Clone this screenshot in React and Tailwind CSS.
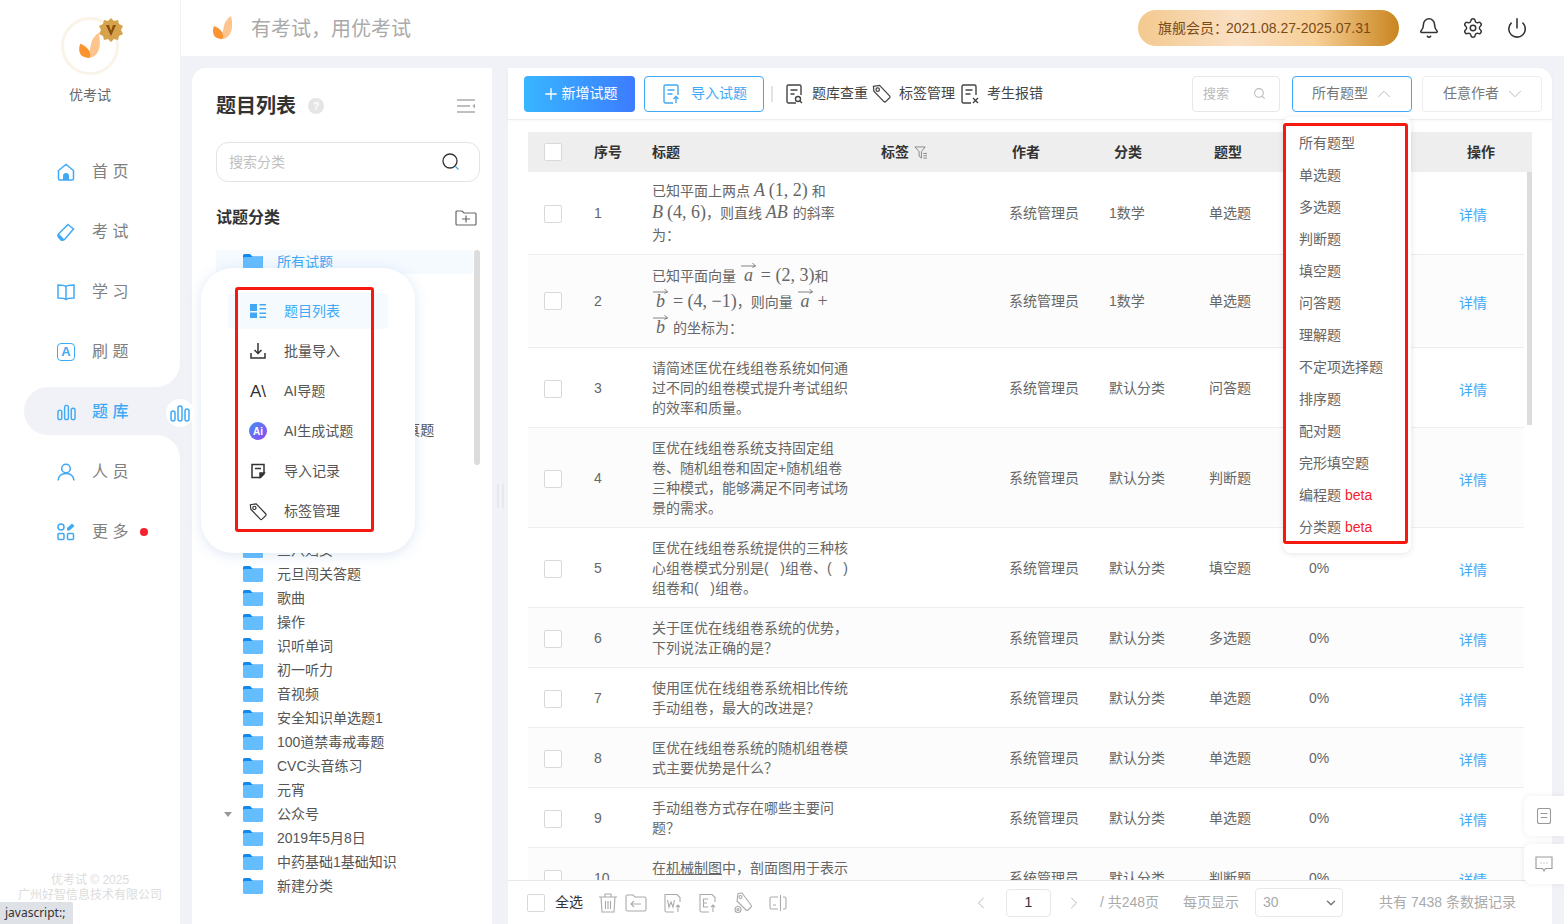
import React from 'react';
import {Bell, ChevronDown, ChevronLeft, ChevronRight, ChevronUp, Plus, Power, Search, Settings} from 'lucide-react';

const Logo = ({className}) => (
    <svg viewBox="0 0 20 24" className={className}>
        <path d="M18 0c2 8 2 18-5 22-4 2-7 1-8 0 5-2 5-8 6-12 1-5 4-8 7-10z" fill="#fdc48d" />
        <path d="M1 10c-2 5-1 10 3 12 3 1 6 1 6 0 1-5-2-9-9-12z" fill="#fb9331" />
    </svg>
);

const Badge = () => (
    <svg viewBox="0 0 24 24" className="absolute top-[-2px] right-[-7px] h-6 w-6">
        <path
            d="M12 0l3 3 4-1 1 4 4 2-2 4 2 4-4 2-1 4-4-1-3 3-3-3-4 1-1-4-4-2 2-4-2-4 4-2 1-4 4 1z"
            fill="#d6a24c"
        />
        <path d="M7 7l5 11 5-11h-3l-2 6-2-6z" fill="#8a4f0d" />
    </svg>
);

const HomeIcon = () => (
    <svg viewBox="0 0 18 18" className="h-[18px] w-[18px]" fill="none" stroke="#3fa9f5" strokeWidth="1.5">
        <path d="M1.5 7.5L9 1.5l7.5 6v8a1.5 1.5 0 0 1-1.5 1.5H3a1.5 1.5 0 0 1-1.5-1.5z" />
        <path d="M6 17v-4a3 3 0 0 1 6 0v4z" fill="#3fa9f5" stroke="none" />
    </svg>
);
const ExamIcon = () => (
    <svg viewBox="0 0 18 18" className="h-[18px] w-[18px]" fill="none" stroke="#3fa9f5" strokeWidth="1.5">
        <path d="M11 1.5l5.500 4.500-9 10.500a1.500 1.500 0 0 1-2 0L1.500 13a1.500 1.500 0 0 1 0-2z" />
        <path d="M1.500 10.500l6 6-2 1.500H4L.5 14v-2z" fill="#3fa9f5" stroke="none" />
    </svg>
);
const BookIcon = () => (
    <svg viewBox="0 0 18 18" className="h-[18px] w-[18px]" fill="none" stroke="#3fa9f5" strokeWidth="1.5">
        <path d="M9 3.500C7.500 2 5 2 1 2v13c4 0 6.500 0 8 1.500 1.500-1.500 4-1.500 8-1.500V2c-4 0-6.500 0-8 1.500z" />
        <path d="M9 3.500v13" />
    </svg>
);
const BarsIcon = ({className = 'h-[17px] w-[20px]'}) => (
    <svg viewBox="0 0 20 17" className={className} fill="none" stroke="#3fa9f5" strokeWidth="1.500">
        <rect x="1" y="6" width="4" height="10" rx="2" />
        <rect x="8" y="1" width="4" height="15" rx="2" />
        <rect x="15" y="4" width="4" height="12" rx="2" />
    </svg>
);
const UserIcon = () => (
    <svg viewBox="0 0 18 18" className="h-[18px] w-[18px]" fill="none" stroke="#3fa9f5" strokeWidth="1.500">
        <circle cx="9" cy="5.500" r="4.300" />
        <path d="M1 17.500c.5-4.500 3.500-7 8-7s7.500 2.500 8 7" />
    </svg>
);
const MoreIcon = () => (
    <svg viewBox="0 0 18 18" className="h-[18px] w-[18px]" fill="none" stroke="#3fa9f5" strokeWidth="1.500">
        <circle cx="4" cy="4" r="3" />
        <rect x="1" y="10.500" width="6" height="6" rx="1" />
        <rect x="10.500" y="10.500" width="6" height="6" rx="1" />
        <path d="M10 5l5-4.500 2.500 2.500-5 4.500h-2.500z" fill="#3fa9f5" stroke="none" />
    </svg>
);
const TagIcon = ({className = 'h-[20px] w-[20px]', stroke = '#444'}) => (
    <svg viewBox="0 0 20 20" className={className} fill="none" stroke={stroke} strokeWidth="1.300">
        <path d="M1.500 2.500l6.500-1 10.500 11a1.500 1.500 0 0 1 0 2l-4 4a1.500 1.500 0 0 1-2 0L2 7.500z" />
        <circle cx="6" cy="6" r="1.800" />
    </svg>
);
const DocIcon = ({children, stroke = '#444', className = 'h-[20px] w-[18px]'}) => (
    <svg viewBox="0 0 18 20" className={className} fill="none" stroke={stroke} strokeWidth="1.400">
        <path d="M10 19H2.500A1.500 1.500 0 0 1 1 17.500v-15A1.500 1.500 0 0 1 2.500 1h11A1.500 1.500 0 0 1 15 2.500V11" />
        {children}
    </svg>
);
const FolderIcon = () => (
    <svg viewBox="0 0 20 16" className="h-[16px] w-[20px] shrink-0">
        <path d="M0 1.500A1.500 1.500 0 0 1 1.500 0h5.500l2.500 2.500H20V6H0z" fill="#0d8bf2" />
        <rect x="0" y="3" width="20" height="13" rx="1.500" fill="#64bdff" />
    </svg>
);

const MENU = [
    {label: '首 页', icon: <HomeIcon />},
    {label: '考 试', icon: <ExamIcon />},
    {label: '学 习', icon: <BookIcon />},
    {
        label: '刷 题',
        icon: (
            <span className="flex h-[18px] w-[18px] items-center justify-center rounded-[4px] border-[1.5px] border-[#3fa9f5] text-[13px] font-bold text-[#3fa9f5]">
                A
            </span>
        ),
    },
];

const NavItem = ({icon, label, dot}) => (
    <div className="flex h-[60px] items-center pl-[57px]">
        <span className="mr-[17px] flex w-[18px] justify-center">{icon}</span>
        <span className="text-[16px] text-[#808080]">{label}</span>
        {dot && <span className="ml-[12px] h-2 w-2 rounded-full bg-[#f5222d]" />}
    </div>
);

const Sidebar = () => (
    <div className="relative flex w-[180px] shrink-0 flex-col bg-[#f0f2f7]">
        <div className="rounded-br-[24px] bg-white pb-[5px]">
            <div className="flex h-[142px] flex-col items-center pt-[17px]">
                <div className="relative flex h-[58px] w-[58px] items-center justify-center rounded-full border-[3px] border-[#faf3e8] bg-white">
                    <Logo className="h-[26px] w-[22px]" />
                    <Badge />
                </div>
                <span className="mt-[10px] text-[14px] leading-[20px] text-[#666]">优考试</span>
            </div>
            {MENU.map(item => (
                <NavItem key={item.label} {...item} />
            ))}
        </div>
        <div className="bg-white">
            <div className="relative ml-[24px] flex h-[48px] items-center rounded-l-[24px] bg-[#f0f2f7] pt-[2px] pl-[33px]">
                <span className="mr-[16px] flex w-[19px] justify-center">
                    <BarsIcon />
                </span>
                <span className="text-[16px] font-medium text-[#3fa9f5]">题 库</span>
            </div>
        </div>
        <div className="flex flex-1 flex-col rounded-tr-[24px] bg-white pt-[7px]">
            <NavItem label="人 员" icon={<UserIcon />} />
            <NavItem label="更 多" icon={<MoreIcon />} dot />
            <div className="mt-auto pb-[21px] text-center text-[12px] leading-[15px] text-[#dcdcdc]">
                <div>优考试 © 2025</div>
                <div>广州好智信息技术有限公司</div>
            </div>
        </div>
        <div className="absolute top-[399px] left-[166px] z-30 flex h-[28px] w-[28px] items-center justify-center rounded-full bg-white">
            <BarsIcon className="h-[17px] w-[20px]" />
        </div>
    </div>
);

const Header = () => (
    <div className="flex h-[56px] shrink-0 items-center border-l border-[#f0f2f7] bg-white pr-[36px] pl-[32px]">
        <Logo className="h-[24px] w-[20px]" />
        <span className="ml-[18px] pt-[2px] text-[20px] text-[#aaa]">有考试，用优考试</span>
        <div className="mr-[19px] ml-auto flex h-[36px] w-[261px] items-center rounded-full bg-[linear-gradient(90deg,#f3c98e_0%,#fae0c4_38%,#f7cf97_68%,#c9851f_100%)] pl-[20px] text-[14px] text-[#7a4a14]">
            旗舰会员<span className="-mr-[2px]">：</span>2021.08.27-2025.07.31
        </div>
        <Bell className="h-[22px] w-[22px] text-[#333]" strokeWidth={1.7} />
        <Settings className="ml-[22px] h-[22px] w-[22px] text-[#333]" strokeWidth={1.6} />
        <Power className="ml-[22px] h-[22px] w-[22px] text-[#333]" strokeWidth={1.7} />
    </div>
);

const TREE = [
    '所有试题',
    '',
    '',
    '',
    '',
    '',
    '',
    '2024年全国高考数学真题',
    '',
    '',
    '',
    '',
    '三八妇女',
    '元旦闯关答题',
    '歌曲',
    '操作',
    '识听单词',
    '初一听力',
    '音视频',
    '安全知识单选题1',
    '100道禁毒戒毒题',
    'CVC头音练习',
    '元宵',
    '公众号',
    '2019年5月8日',
    '中药基础1基础知识',
    '新建分类',
];

const LeftPanel = () => (
    <div className="flex w-[300px] shrink-0 flex-col overflow-hidden rounded-tl-[14px] bg-white pt-[24px] pr-[12px] pl-[24px]">
        <div className="flex h-[28px] items-center">
            <span className="text-[20px] font-bold text-[#333]">题目列表</span>
            <span className="ml-[12px] flex h-4 w-4 items-center justify-center rounded-full bg-[#e5e5e5] text-[11px] font-bold text-white">
                ?
            </span>
            <svg viewBox="0 0 20 16" className="mr-[4px] ml-auto h-[16px] w-[20px]" stroke="#aaa" strokeWidth="1.500">
                <path d="M1 2h18M1 8h13M1 14h18" />
                <path d="M19 5.500L16.500 8l2.500 2.500z" fill="#aaa" stroke="none" />
            </svg>
        </div>
        <div className="mt-[22px] flex h-[40px] items-center justify-between rounded-[12px] border border-[#e3e3e3] pr-[19px] pl-[12px]">
            <span className="text-[14px] text-[#c0c0c0]">搜索分类</span>
            <svg viewBox="0 0 18 18" className="h-[18px] w-[18px]" fill="none" strokeWidth="1.300">
                <circle cx="8" cy="8" r="7" stroke="#333" />
                <path d="M13.500 13.500l3 3" stroke="#3fa9f5" />
            </svg>
        </div>
        <div className="mt-[24px] flex h-[24px] items-center justify-between">
            <span className="text-[16px] font-bold text-[#333]">试题分类</span>
            <svg viewBox="0 0 22 16" className="mr-[3px] h-[16px] w-[22px]" fill="none" stroke="#666" strokeWidth="1.200">
                <path d="M1 2a1 1 0 0 1 1-1h5l2 2h11a1 1 0 0 1 1 1v10a1 1 0 0 1-1 1H2a1 1 0 0 1-1-1z" />
                <path d="M7 9h8M11 5.500v7" />
            </svg>
        </div>
        <div className="relative mt-[20px] min-h-0 flex-1 overflow-hidden">
            <div className="absolute top-0 right-0 h-[215px] w-[6px] rounded-[3px] bg-[#dcdcdc]" />
            {TREE.map((name, i) => (
                <div
                    key={i}
                    className={
                        'relative mr-[7px] flex h-[24px] items-center pl-[27px] text-[14px] ' +
                        (i === 0 ? 'bg-[#f5faff] text-[#3fa9f5]' : 'text-[#555]')
                    }>
                    {name === '公众号' && (
                        <span className="absolute top-[10px] left-[8px] h-0 w-0 border-x-[4px] border-t-[5px] border-x-transparent border-t-[#999]" />
                    )}
                    <FolderIcon />
                    <span className="ml-[14px] whitespace-nowrap">{name}</span>
                </div>
            ))}
        </div>
    </div>
);

const ToolButton = ({icon, label}) => (
    <div className="flex items-center text-[14px] text-[#444]">
        {icon}
        <span className="ml-[8px]">{label}</span>
    </div>
);

const Toolbar = () => (
    <div className="flex h-[52px] shrink-0 items-center border-b border-[#eeeeee] pr-[10px] pl-[16px] shadow-[0_1px_3px_rgba(0,0,0,0.03)]">
        <div className="flex h-[36px] w-[111px] items-center justify-center rounded-[4px] bg-gradient-to-r from-[#38b6ff] to-[#3d7bff] text-[14px] text-white">
            <Plus className="mr-[2px] h-[18px] w-[18px]" strokeWidth={1.800} />
            新增试题
        </div>
        <div className="ml-[9px] flex h-[36px] w-[120px] items-center justify-center rounded-[4px] border border-[#3fa9f5] pl-[2px] text-[14px] text-[#3fa9f5]">
            <DocIcon stroke="#3fa9f5" className="mr-[10px] h-[20px] w-[18px]">
                <path d="M4.500 6h7M4.500 10h5" />
                <path d="M13 19v-6M10.500 15l2.500-2.500 2.500 2.500" />
            </DocIcon>
            导入试题
        </div>
        <div className="mx-[7px] h-[16px] w-[2px] bg-[#e3e3e3]" />
        <div className="ml-[6px] flex items-center gap-[4px]">
            <ToolButton
                label="题库查重"
                icon={
                    <DocIcon>
                        <path d="M4.500 6h7M4.500 10h4" />
                        <circle cx="12" cy="15" r="2.500" />
                        <path d="M14 17l2 2" />
                    </DocIcon>
                }
            />
            <ToolButton label="标签管理" icon={<TagIcon className="h-[19px] w-[19px]" />} />
            <div className="ml-[2px]">
                <ToolButton
                    label="考生报错"
                    icon={
                        <DocIcon>
                            <path d="M4.500 6h7M4.500 10h5" />
                            <path d="M12 14l5 5M17 14l-5 5" />
                        </DocIcon>
                    }
                />
            </div>
        </div>
        <div className="ml-auto flex h-[36px] w-[88px] items-center justify-between rounded-[4px] border border-[#e8e8e8] pr-[13px] pl-[10px] text-[13px] text-[#bbb]">
            搜索
            <Search className="h-[13px] w-[13px] text-[#bbb]" />
        </div>
        <div className="ml-[12px] flex h-[36px] w-[120px] items-center rounded-[4px] border border-[#3fa9f5] pl-[19px] text-[14px] text-[#777]">
            所有题型
            <ChevronUp className="ml-[5px] h-[22px] w-[22px] text-[#aaa]" strokeWidth={0.9} />
        </div>
        <div className="ml-[10px] flex h-[36px] w-[120px] items-center rounded-[4px] border border-[#eeeeee] pl-[20px] text-[14px] text-[#777]">
            任意作者
            <ChevronDown className="ml-[5px] h-[22px] w-[22px] text-[#aaa]" strokeWidth={0.9} />
        </div>
    </div>
);

const M = ({children}) => (
    <span className="font-['Liberation_Serif',serif] text-[18px] leading-none text-[#666]">{children}</span>
);
const I = ({children}) => (
    <i className="font-['Liberation_Serif',serif] text-[18px] leading-none text-[#666]">{children}</i>
);
const Vec = ({children}) => (
    <span className="relative mx-[1px] inline-block w-[15px] text-center leading-none">
        <svg
            viewBox="0 0 15 6"
            className="absolute top-[-4px] left-0 h-[6px] w-[15px]"
            fill="none"
            stroke="#666"
            strokeWidth="0.800">
            <path d="M0 4h14.500M11.500 1l3 3-3 1.500" />
        </svg>
        <I>{children}</I>
    </span>
);

const Plain = ({lines}) => lines.map(line => <div key={line}>{line}</div>);

const ROWS = [
    {
        no: 1,
        rowClass: 'h-[82px]',
        author: '系统管理员',
        cat: '1数学',
        type: '单选题',
        rate: '',
        title: (
            <div className="-mt-[2px] leading-[22px]">
                <div>
                    已知平面上两点 <I>A</I> <M>(1, 2)</M> 和
                </div>
                <div>
                    <I>B</I> <M>(4, 6)</M>，则直线 <I>AB</I>
                    <span className="ml-[5px]">的斜率</span>
                </div>
                <div>为：</div>
            </div>
        ),
    },
    {
        no: 2,
        rowClass: 'h-[93px]',
        author: '系统管理员',
        cat: '1数学',
        type: '单选题',
        rate: '',
        title: (
            <div className="mt-[2px] leading-[26px]">
                <div>
                    已知平面向量 <Vec>a</Vec> <M>= (2, 3)</M>和
                </div>
                <div>
                    <Vec>b</Vec> <M>= (4, −1)</M>，则向量 <Vec>a</Vec> <M>+</M>
                </div>
                <div>
                    <Vec>b</Vec> 的坐标为：
                </div>
            </div>
        ),
    },
    {
        no: 3,
        rowClass: 'h-[80px]',
        author: '系统管理员',
        cat: '默认分类',
        type: '问答题',
        rate: '',
        title: <Plain lines={['请简述匡优在线组卷系统如何通', '过不同的组卷模式提升考试组织', '的效率和质量。']} />,
    },
    {
        no: 4,
        rowClass: 'h-[100px]',
        author: '系统管理员',
        cat: '默认分类',
        type: '判断题',
        rate: '',
        title: (
            <Plain
                lines={[
                    '匡优在线组卷系统支持固定组',
                    '卷、随机组卷和固定+随机组卷',
                    '三种模式，能够满足不同考试场',
                    '景的需求。',
                ]}
            />
        ),
    },
    {
        no: 5,
        rowClass: 'h-[80px]',
        author: '系统管理员',
        cat: '默认分类',
        type: '填空题',
        rate: '0%',
        title: <Plain lines={['匡优在线组卷系统提供的三种核', '心组卷模式分别是(   )组卷、(   )', '组卷和(   )组卷。']} />,
    },
    {
        no: 6,
        rowClass: 'h-[60px]',
        author: '系统管理员',
        cat: '默认分类',
        type: '多选题',
        rate: '0%',
        title: <Plain lines={['关于匡优在线组卷系统的优势，', '下列说法正确的是？']} />,
    },
    {
        no: 7,
        rowClass: 'h-[60px]',
        author: '系统管理员',
        cat: '默认分类',
        type: '单选题',
        rate: '0%',
        title: <Plain lines={['使用匡优在线组卷系统相比传统', '手动组卷，最大的改进是？']} />,
    },
    {
        no: 8,
        rowClass: 'h-[60px]',
        author: '系统管理员',
        cat: '默认分类',
        type: '单选题',
        rate: '0%',
        title: <Plain lines={['匡优在线组卷系统的随机组卷模', '式主要优势是什么？']} />,
    },
    {
        no: 9,
        rowClass: 'h-[60px]',
        author: '系统管理员',
        cat: '默认分类',
        type: '单选题',
        rate: '0%',
        title: <Plain lines={['手动组卷方式存在哪些主要问', '题？']} />,
    },
    {
        no: 10,
        rowClass: 'h-[60px]',
        author: '系统管理员',
        cat: '默认分类',
        type: '判断题',
        rate: '0%',
        title: (
            <div>
                在<u className="underline">机械制图</u>中，剖面图用于表示
                <br />
                物体的内部结构。
            </div>
        ),
    },
];

const GRID = 'grid grid-cols-[66px_58px_229px_128px_100px_100px_100px_150px_1fr] items-center';

const Checkbox = () => <span className="ml-[16px] block h-[18px] w-[18px] rounded-[2px] border border-[#d9d9d9] bg-white" />;

const Table = () => (
    <div className="relative min-h-0 flex-1 overflow-hidden px-[20px] pt-[12px]">
        <div className={GRID + ' h-[40px] bg-[#eeeeee] text-[14px] font-bold text-[#333]'}>
            <Checkbox />
            <span>序号</span>
            <span>标题</span>
            <span className="flex items-center">
                标签
                <svg viewBox="0 0 14 14" className="ml-[5px] h-[13px] w-[13px]" fill="none" stroke="#777" strokeWidth="0.900">
                    <path d="M1 1h11L8 6v7L5.500 11V6z" />
                    <path d="M10 8h4M10 10.500h4M10 13h4" />
                </svg>
            </span>
            <span className="pl-[3px]">作者</span>
            <span className="pl-[5px]">分类</span>
            <span className="pl-[5px]">题型</span>
            <span />
            <span className="pl-[8px]">操作</span>
        </div>
        <div className="mr-[8px] pt-[1px]">
            {ROWS.map(row => {
                const cell = row.no > 2 ? 'pt-[2px]' : '';
                return (
                    <div
                        key={row.no}
                        className={
                            GRID +
                            ' border-b border-[#eeeeee] text-[14px] text-[#666] ' +
                            row.rowClass +
                            (row.no % 2 === 0 ? ' bg-[#fcfcfc]' : ' bg-white')
                        }>
                        <div className={cell}>
                            <Checkbox />
                        </div>
                        <span className={cell}>{row.no}</span>
                        <div className="col-span-2 leading-[20px] whitespace-pre">{row.title}</div>
                        <span className={cell}>{row.author}</span>
                        <span className={cell}>{row.cat}</span>
                        <span className={cell}>{row.type}</span>
                        <span className={cell}>{row.rate}</span>
                        <span className={'mt-[4px] text-[#3fa9f5] ' + cell}>详情</span>
                    </div>
                );
            })}
        </div>
        <div className="absolute top-[52px] right-[20px] h-[253px] w-[5px] bg-[#dcdcdc]" />
    </div>
);

const FooterIcons = () => (
    <div className="ml-[16px] flex items-center gap-[17px]">
        <svg viewBox="0 0 18 20" className="-mr-[9px] h-[20px] w-[18px]" fill="none" stroke="#aaa" strokeWidth="1.100">
            <path d="M0 4h18M6 4V1h6v3M2 4l1 15h12l1-15M6.500 8v8M9 8v8M11.500 8v8" />
        </svg>
        <svg viewBox="0 0 22 18" className="h-[18px] w-[22px]" fill="none" stroke="#aaa" strokeWidth="1.100">
            <path d="M1 2.500A1.500 1.500 0 0 1 2.500 1H8l2 2h9.500A1.500 1.500 0 0 1 21 4.500v11a1.500 1.500 0 0 1-1.500 1.500h-17A1.500 1.500 0 0 1 1 15.500z" />
            <path d="M16 10H6M9 7l-3 3 3 3" />
        </svg>
        <svg viewBox="0 0 18 20" className="h-[20px] w-[18px]" fill="none" stroke="#aaa" strokeWidth="1.100">
            <path d="M10 19H2.500A1.500 1.500 0 0 1 1 17.500v-16h12l3 3V9" />
            <path d="M3.500 7l1.500 7 2-5 2 5 1.500-7M14 19v-7M12 14l2-2 2 2" />
        </svg>
        <svg viewBox="0 0 18 20" className="h-[20px] w-[18px]" fill="none" stroke="#aaa" strokeWidth="1.100">
            <path d="M10 19H2.500A1.500 1.500 0 0 1 1 17.500v-16h12l3 3V9" />
            <path d="M9 6H4.500v8H9M4.500 10H8M14 19v-7M12 14l2-2 2 2" />
        </svg>
        <svg viewBox="0 0 18 22" className="h-[22px] w-[18px]" fill="none" stroke="#aaa" strokeWidth="1.100">
            <path d="M4 1.500l4-.5 9 12a1.500 1.500 0 0 1 0 2l-3 3a1.500 1.500 0 0 1-2 0L3 9z" />
            <circle cx="6.500" cy="5" r="1.500" />
            <circle cx="4" cy="17.500" r="3" />
            <circle cx="4" cy="17.500" r="1" />
        </svg>
        <svg viewBox="0 0 18 18" className="h-[18px] w-[18px]" fill="none" stroke="#aaa" strokeWidth="1.100">
            <path d="M9 3H2.500A1.500 1.500 0 0 0 1 4.500v9A1.500 1.500 0 0 0 2.500 15H9M14 3h1.500A1.500 1.500 0 0 1 17 4.500v9a1.500 1.500 0 0 1-1.500 1.500H14" />
            <path d="M11.500 1v16M4 11h3" />
        </svg>
    </div>
);

const Footer = () => (
    <div className="flex h-[44px] shrink-0 items-center border-t border-[#e8e8e8] bg-white pr-[36px] pl-[19px] text-[14px]">
        <span className="h-[18px] w-[18px] rounded-[2px] border border-[#d9d9d9]" />
        <span className="ml-[10px] text-[#333]">全选</span>
        <FooterIcons />
        <ChevronLeft className="mr-[15px] ml-auto h-[20px] w-[20px] text-[#aaa]" strokeWidth={1} />
        <span className="mr-[13px] flex h-[28px] w-[45px] items-center justify-center rounded-[4px] border border-[#e8e8e8] text-[#333]">
            1
        </span>
        <ChevronRight className="h-[20px] w-[20px] text-[#aaa]" strokeWidth={1} />
        <span className="ml-[16px] text-[#aaa]">/ 共248页</span>
        <span className="ml-[24px] text-[#aaa]">每页显示</span>
        <span className="ml-[16px] flex h-[29px] w-[88px] items-center justify-between rounded-[4px] border border-[#e8e8e8] pr-[4px] pl-[7px] text-[#aaa]">
            30
            <ChevronDown className="h-[14px] w-[14px] text-[#777]" strokeWidth={2.500} />
        </span>
        <span className="ml-[36px] text-[#aaa]">共有 7438 条数据记录</span>
    </div>
);

const POPUP = [
    {
        label: '题目列表',
        active: true,
        icon: (
            <svg viewBox="0 0 16 16" className="h-4 w-4" fill="#3fa9f5">
                <path d="M0 1h7v7H0zM0 9.500h7V15H0zM9.500 1H16v1.500H9.500zM9.500 5H16v1.500H9.500zM9.500 9.500H16V11H9.500zM9.500 13.500H16V15H9.500z" />
            </svg>
        ),
    },
    {
        label: '批量导入',
        icon: (
            <svg viewBox="0 0 16 16" className="h-4 w-4" fill="none" stroke="#333" strokeWidth="1.500">
                <path d="M8 0v10M4.500 7L8 10.500 11.500 7M1 10v5h14v-5" />
            </svg>
        ),
    },
    {
        label: 'AI导题',
        icon: <span className="flex h-4 w-4 items-center text-[17px] leading-none font-medium text-[#333]">A\</span>,
    },
    {
        label: 'AI生成试题',
        icon: (
            <span className="flex h-[18px] w-[18px] items-center justify-center rounded-full bg-gradient-to-br from-[#2f8ef5] to-[#8a3df0] text-[10px] font-bold text-white">
                Ai
            </span>
        ),
    },
    {
        label: '导入记录',
        icon: (
            <svg viewBox="0 0 16 16" className="h-4 w-4" fill="none" stroke="#333" strokeWidth="1.500">
                <path d="M2 1.500h12V11l-3.500 3.500H2z" />
                <path d="M5 5.500h6" />
                <path d="M10 14v-4h4z" fill="#333" />
            </svg>
        ),
    },
    {label: '标签管理', icon: <TagIcon className="h-[19px] w-[19px]" stroke="#333" />},
];

const CategoryPopup = () => (
    <div className="absolute top-[268px] left-[201px] z-20 h-[285px] w-[214px] rounded-[32px] bg-white pt-[25px] pl-[27px] shadow-[0_2px_14px_rgba(90,140,200,0.2)]">
        {POPUP.map(item => (
            <div
                key={item.label}
                className={
                    'mb-[4px] flex h-[36px] w-[160px] items-center rounded-[4px] pl-[21px] text-[14px] ' +
                    (item.active ? 'bg-[#f5faff] text-[#3fa9f5]' : 'text-[#555]')
                }>
                <span className="flex w-[18px] justify-center">{item.icon}</span>
                <span className="ml-[17px]">{item.label}</span>
            </div>
        ))}
        <div className="absolute top-[19px] left-[34px] h-[245px] w-[139px] rounded-[3px] border-[3px] border-[#f5190f]" />
    </div>
);

const TYPES = ['所有题型', '单选题', '多选题', '判断题', '填空题', '问答题', '理解题', '不定项选择题', '排序题', '配对题', '完形填空题'];

const TypeDropdown = () => (
    <div className="absolute top-[117px] left-[1283px] z-20 h-[436px] w-[128px] rounded-[8px] bg-white pt-[10px] shadow-[0_1px_6px_rgba(0,0,0,0.1)]">
        {TYPES.map(t => (
            <div key={t} className="flex h-[32px] items-center pl-[16px] text-[14px] text-[#666]">
                {t}
            </div>
        ))}
        <div className="flex h-[32px] items-center pl-[16px] text-[14px] text-[#666]">
            编程题<span className="ml-[4px] text-[#f5222d]">beta</span>
        </div>
        <div className="flex h-[32px] items-center pl-[16px] text-[14px] text-[#666]">
            分类题<span className="ml-[4px] text-[#f5222d]">beta</span>
        </div>
        <div className="absolute top-[6px] left-0 h-[421px] w-[125px] rounded-[3px] border-[3px] border-[#f5190f]" />
    </div>
);

const SideTools = () => (
    <div className="absolute top-[796px] right-0 z-10 flex flex-col gap-[8px]">
        <div className="flex h-[40px] w-[40px] items-center justify-center rounded-l-[8px] bg-white shadow-[0_0_6px_rgba(0,0,0,0.08)]">
            <svg viewBox="0 0 14 16" className="h-[16px] w-[14px]" fill="none" stroke="#999" strokeWidth="1.100">
                <rect x="0.500" y="0.500" width="13" height="15" rx="2" />
                <path d="M3.500 5.500h7M3.500 9.500h7" />
            </svg>
        </div>
        <div className="flex h-[40px] w-[40px] items-center justify-center rounded-l-[8px] bg-white shadow-[0_0_6px_rgba(0,0,0,0.08)]">
            <svg viewBox="0 0 18 16" className="h-[16px] w-[18px]" fill="none" stroke="#999" strokeWidth="1.100">
                <path d="M1 1h16v11.500h-6.500L9 15l-1.500-2.500H1z" />
                <path d="M5.500 7h1M8.500 7h1M11.500 7h1" />
            </svg>
        </div>
    </div>
);

export default function App() {
    return (
        <div className="relative flex h-screen w-full overflow-hidden bg-[#f0f2f7] font-['Liberation_Sans','Noto_Sans_CJK_SC',sans-serif]">
            <Sidebar />
            <div className="flex min-w-0 flex-1 flex-col">
                <Header />
                <div className="flex min-h-0 flex-1 pt-[12px] pr-[12px] pl-[12px]">
                    <LeftPanel />
                    <div className="flex w-[16px] shrink-0 items-center justify-center">
                        <div className="h-[24px] w-[7px] border-x-2 border-[#e6e8ec]" />
                    </div>
                    <div className="flex min-w-0 flex-1 flex-col rounded-tr-[14px] bg-white">
                        <Toolbar />
                        <Table />
                        <Footer />
                    </div>
                </div>
            </div>
            <CategoryPopup />
            <TypeDropdown />
            <SideTools />
            <div className="absolute bottom-0 left-0 z-30 flex h-[22px] w-[73px] items-center rounded-tr-[2px] bg-[#dee1e6] pl-[5px] font-['Noto_Sans',sans-serif] text-[12px] text-[#333]">
                javascript:;
            </div>
        </div>
    );
}
